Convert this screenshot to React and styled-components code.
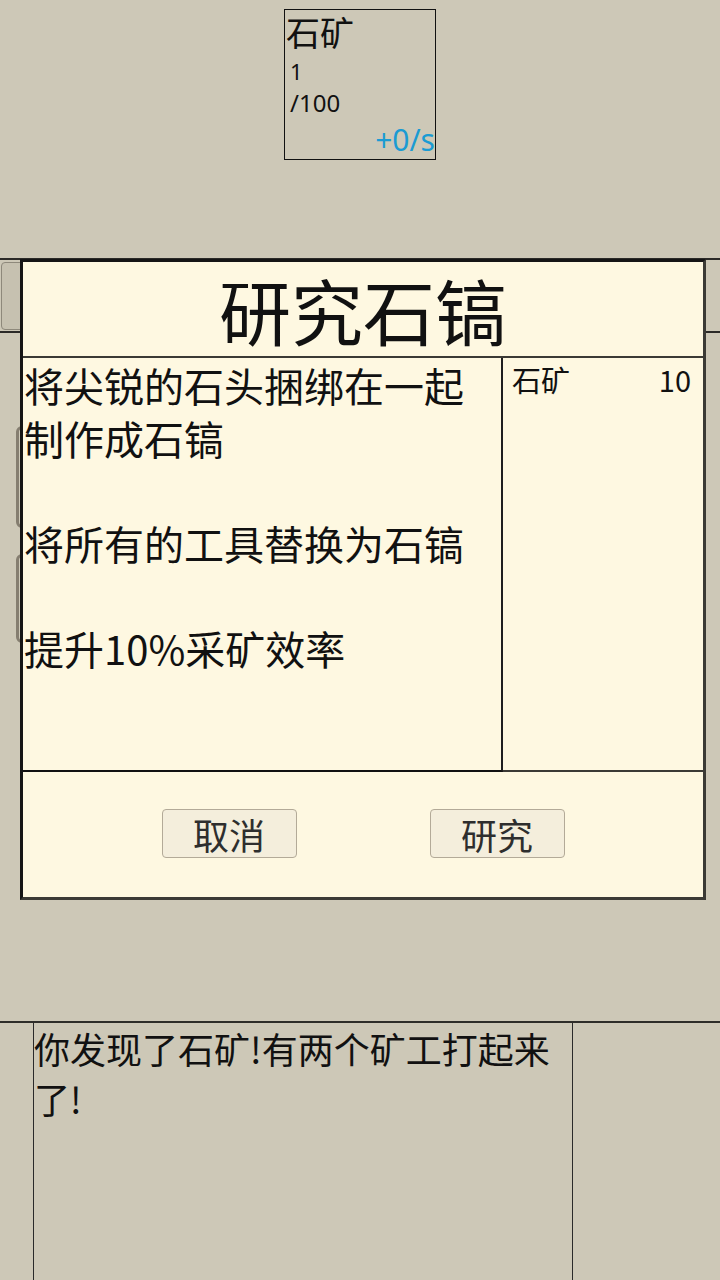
import React from "react";
import styled, { createGlobalStyle } from "styled-components";

const GlobalStyle = createGlobalStyle`
  html, body {
    margin: 0;
    padding: 0;
    background: #cdc8b7;
  }
  body {
    font-family: "Noto Sans CJK SC", "Noto Sans", sans-serif;
    color: #111;
  }
`;

const Page = styled.div`
  position: relative;
  width: 720px;
  height: 1280px;
  display: flex;
  flex-direction: column;
  overflow: hidden;
`;

const TopArea = styled.div`
  display: flex;
  justify-content: center;
  padding-top: 9px;
`;

const ResourceCard = styled.div`
  box-sizing: border-box;
  width: 152px;
  height: 151px;
  border: 1px solid #111;
  display: flex;
  flex-direction: column;
  font-family: "Noto Sans", "Noto Sans CJK SC", sans-serif;
`;

const ResourceName = styled.div`
  font-size: 34px;
  line-height: 46px;
  padding-left: 1px;
`;

const ResourceNum = styled.div`
  font-size: ${(p) => p.$size}px;
  line-height: ${(p) => p.$lh}px;
  padding-left: 5px;
`;

const ResourceRate = styled.div`
  margin-top: auto;
  align-self: flex-end;
  font-size: 30px;
  line-height: 38px;
  color: #1b9bd3;
`;

const Toolbar = styled.div`
  margin-top: 98px;
  height: 71px;
  border-top: 2px solid #2b2a27;
  border-bottom: 2px solid #2b2a27;
  display: flex;
  align-items: center;
  padding-left: 1px;
`;

const ToolButton = styled.div`
  box-sizing: border-box;
  width: 120px;
  height: 68px;
  background: #c6c1b0;
  border: 1px solid #8e897b;
  border-radius: 4px;
  font-size: 30px;
  display: flex;
  align-items: center;
  justify-content: center;
`;

const ResearchList = styled.div`
  margin-top: 93px;
  padding-left: 16px;
  display: flex;
  flex-direction: column;
  gap: 26px;
`;

const ResearchItem = styled.div`
  box-sizing: border-box;
  width: 320px;
  height: ${(p) => p.$h}px;
  border: 3px solid #857e70;
  border-radius: 6px;
`;

const LogArea = styled.div`
  margin-top: auto;
  height: 257px;
  border-top: 2px solid #2e2d29;
  display: flex;
  padding-left: 33px;
`;

const LogBox = styled.div`
  width: 538px;
  border-left: 1px solid #2a2a2a;
  border-right: 1px solid #2a2a2a;
  font-size: 36px;
  line-height: 50px;
`;

const Modal = styled.div`
  position: absolute;
  top: 259px;
  left: 20px;
  box-sizing: border-box;
  width: 686px;
  height: 641px;
  background: #fef8e1;
  border: 3px solid #3b3a35;
  border-top-color: #151515;
  border-left-color: #151515;
  display: flex;
  flex-direction: column;
`;

const ModalTitle = styled.div`
  box-sizing: border-box;
  height: 96px;
  border-bottom: 2px solid #3b3a35;
  font-size: 72px;
  line-height: 94px;
  text-align: center;
`;

const ModalBody = styled.div`
  display: flex;
  height: 414px;
`;

const Description = styled.div`
  box-sizing: border-box;
  width: 480px;
  border-right: 2px solid #1e1e1e;
  border-bottom: 2px solid #111;
  font-size: 40px;
  line-height: 52.5px;
  padding: 1px 0 0 1px;
  white-space: pre-wrap;
`;

const CostPane = styled.div`
  box-sizing: border-box;
  flex: 1;
  border-bottom: 2px solid #3b3a35;
  padding: 0 12px 0 9px;
`;

const CostRow = styled.div`
  display: flex;
  justify-content: space-between;
  font-size: 29px;
  line-height: 42px;
`;

const ButtonRow = styled.div`
  flex: 1;
  display: flex;
  align-items: center;
  justify-content: center;
  gap: 133px;
  padding-bottom: 2px;
`;

const ActionButton = styled.button`
  box-sizing: border-box;
  width: 135px;
  height: 49px;
  background: #f4eedc;
  border: 1px solid #b3aa98;
  border-radius: 4px;
  color: #2e2e2e;
  font-family: "Noto Sans CJK SC", "Noto Sans", sans-serif;
  font-size: 36px;
  line-height: 1;
  padding: 0;
`;

export default function App() {
  return (
    <Page>
      <GlobalStyle />
      <TopArea>
        <ResourceCard>
          <ResourceName>石矿</ResourceName>
          <ResourceNum $size={22} $lh={30}>1</ResourceNum>
          <ResourceNum $size={24} $lh={34}>/100</ResourceNum>
          <ResourceRate>+0/s</ResourceRate>
        </ResourceCard>
      </TopArea>
      <Toolbar>
        <ToolButton>研究</ToolButton>
      </Toolbar>
      <ResearchList>
        <ResearchItem $h={102} />
        <ResearchItem $h={89} />
      </ResearchList>
      <LogArea>
        <LogBox>你发现了石矿!有两个矿工打起来了!</LogBox>
      </LogArea>

      <Modal>
        <ModalTitle>研究石镐</ModalTitle>
        <ModalBody>
          <Description>
            {"将尖锐的石头捆绑在一起制作成石镐\n\n将所有的工具替换为石镐\n\n提升10%采矿效率"}
          </Description>
          <CostPane>
            <CostRow>
              <span>石矿</span>
              <span>10</span>
            </CostRow>
          </CostPane>
        </ModalBody>
        <ButtonRow>
          <ActionButton>取消</ActionButton>
          <ActionButton>研究</ActionButton>
        </ButtonRow>
      </Modal>
    </Page>
  );
}
